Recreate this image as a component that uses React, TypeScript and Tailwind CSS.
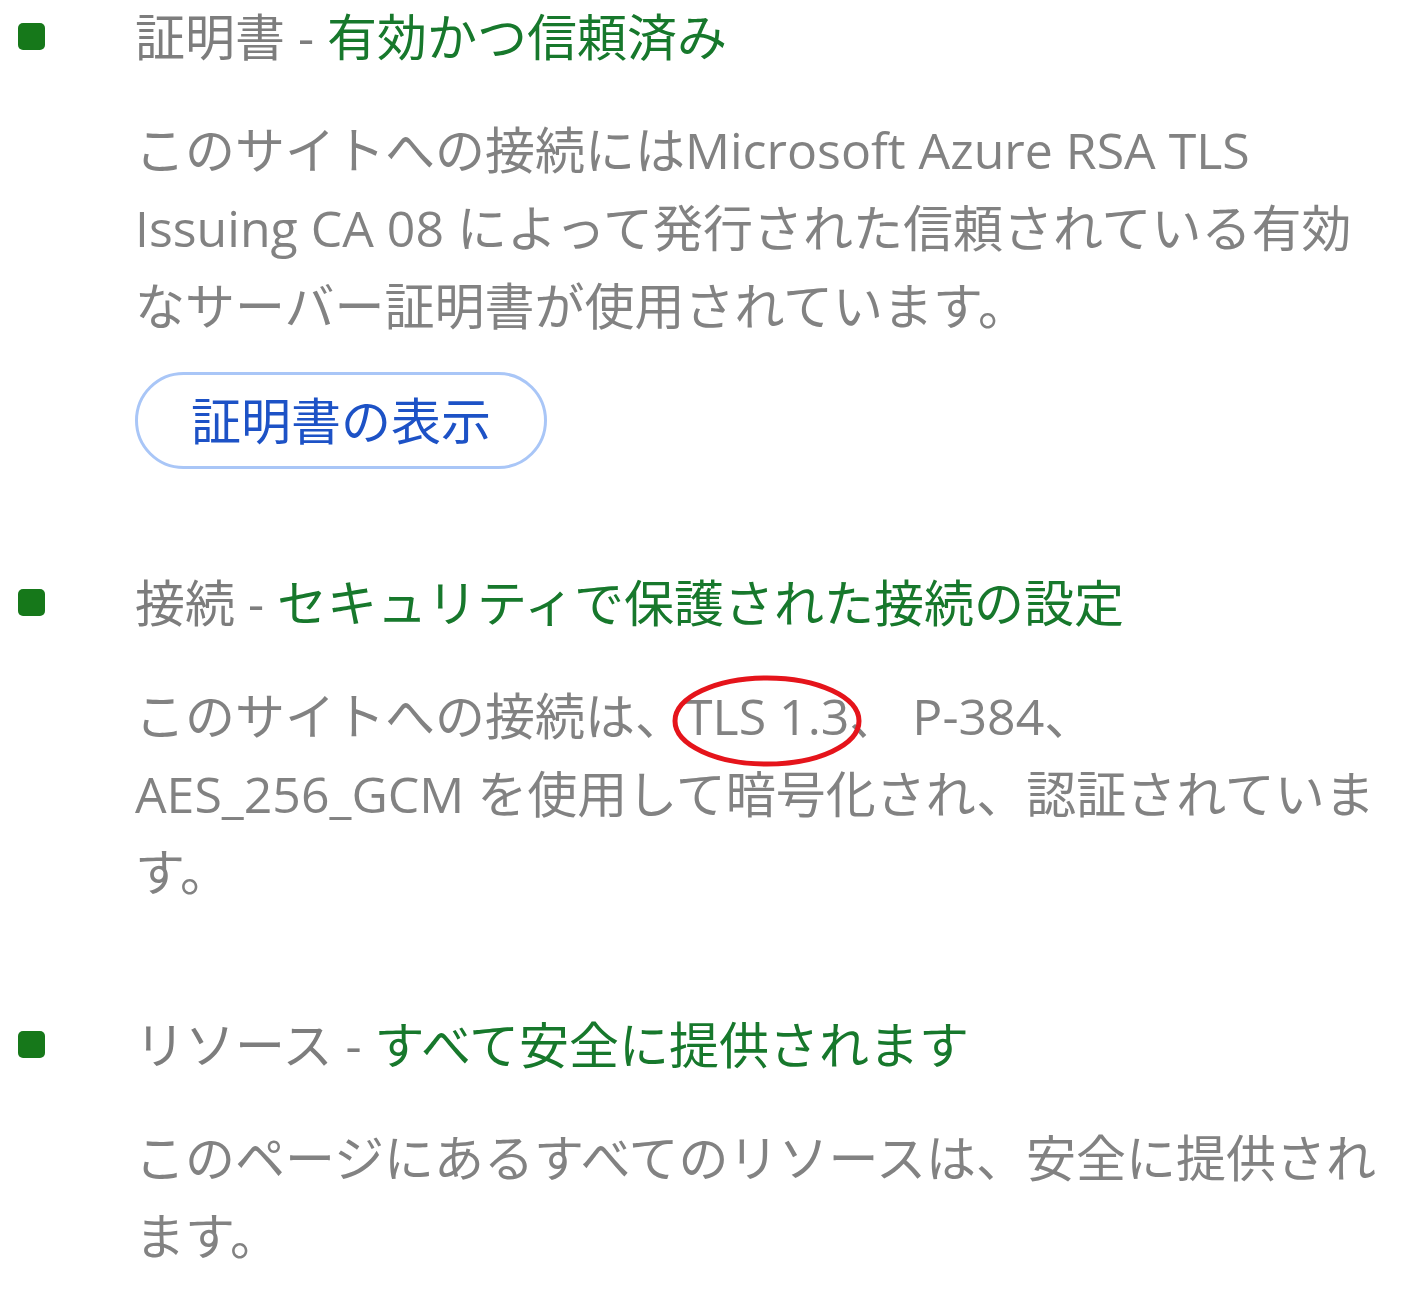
import React from "react";

/* ---------------- Data ---------------- */

interface Section {
  label: string;
  status: string;
  lines: React.ReactNode[];
  button?: string;
}

const font = "font-['Open_Sans','Noto_Sans_CJK_JP',sans-serif]";

const sections: Section[] = [
  {
    label: "証明書",
    status: "有効かつ信頼済み",
    lines: [
      "このサイトへの接続にはMicrosoft Azure RSA TLS",
      "Issuing CA 08 によって発行された信頼されている有効",
      "なサーバー証明書が使用されています。",
    ],
    button: "証明書の表示",
  },
  {
    label: "接続",
    status: "セキュリティで保護された接続の設定",
    lines: [
      <>
        このサイトへの接続は、
        <span className="relative">
          TLS 1.3
          {/* hand-drawn highlight */}
          <svg
            className="absolute left-[-12px] top-[-4px] overflow-visible"
            width="188"
            height="90"
            viewBox="0 0 188 90"
          >
            <ellipse
              cx="94"
              cy="43"
              rx="92"
              ry="43"
              fill="none"
              stroke="#e5141b"
              strokeWidth="5"
            />
          </svg>
        </span>
        、 P-384、
      </>,
      "AES_256_GCM を使用して暗号化され、認証されていま",
      "す。",
    ],
  },
  {
    label: "リソース",
    status: "すべて安全に提供されます",
    lines: ["このページにあるすべてのリソースは、安全に提供され", "ます。"],
  },
];

/* ---------------- Component ---------------- */

const App: React.FC = () => {
  return (
    <div className={`min-h-screen bg-white ${font} text-[50px] leading-[78px]`}>
      <div className="flex flex-col gap-[97px]">
        {sections.map((s, idx) => (
          <div key={idx} className="flex">
            {/* bullet */}
            <div className="w-[135px] shrink-0 pl-[18px] pt-[23px]">
              <div className="h-[27px] w-[27px] rounded-[5px] bg-[#16781a]" />
            </div>

            <div className="flex flex-col">
              <div className="-mt-[2px] whitespace-nowrap text-[#7d7d7d]">
                {s.label} - <span className="text-[#17782c]">{s.status}</span>
              </div>

              <div className="mt-[35px] text-[#828282]">
                {s.lines.map((l, i) => (
                  <div key={i} className="whitespace-nowrap">
                    {l}
                  </div>
                ))}
              </div>

              {s.button && (
                <div className="mt-[27px]">
                  <button className="h-[97px] rounded-full border-[3px] border-[#a9c6f7] px-[53px] text-[50px] leading-none text-[#1d52c6]">
                    {s.button}
                  </button>
                </div>
              )}
            </div>
          </div>
        ))}
      </div>
    </div>
  );
};

export default App;
